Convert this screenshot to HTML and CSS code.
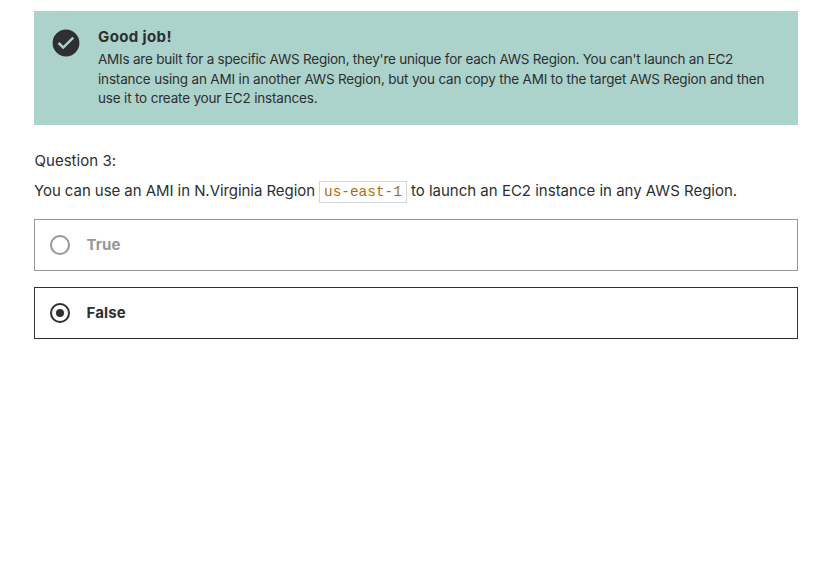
FILE: index.html
```html
<!DOCTYPE html>
<html lang="en">
<head>
<meta charset="utf-8">
<title>Quiz</title>
<link rel="stylesheet" href="styles.css">
</head>
<body>
<main class="quiz">
  <section class="feedback">
    <svg class="feedback-icon" viewBox="0 0 28 28" aria-hidden="true"><circle cx="14" cy="14" r="13.4" fill="#2d2f31"/><path d="M6.6 14l4.6 4.6L21.2 8.6" fill="none" stroke="#acd2cc" stroke-width="2.5"/></svg>
    <div class="feedback-body">
      <h2 class="feedback-title">Good job!</h2>
      <p class="feedback-text"><span class="line-first">AMIs are built for a specific AWS Region, they're unique for each AWS Region. You can't launch an EC2</span><br>instance using an AMI in another AWS Region, but you can copy the AMI to the target AWS Region and then<br>use it to create your EC2 instances.</p>
    </div>
  </section>
  <div class="question-label">Question 3:</div>
  <p class="question"><span class="question-start">You can use an AMI in N.Virginia Region</span><code class="code">us-east-1</code><span>to launch an EC2 instance in any AWS Region.</span></p>
  <div class="answers">
    <label class="answer answer-off"><span class="radio"></span><span class="answer-text">True</span></label>
    <label class="answer answer-on"><span class="radio"></span><span class="answer-text">False</span></label>
  </div>
</main>
</body>
</html>
```
FILE: styles.css
```css
* { box-sizing: border-box; margin: 0; padding: 0; }
body { background: #fff; color: #2d2f31; font-family: Inter, "Liberation Sans", sans-serif; }
.quiz { width: 764px; margin: 11px 0 0 34px; }
.feedback { display: flex; height: 114px; padding: 16px 18px; background: #acd2cc; }
.feedback-icon { flex: none; width: 28px; height: 28px; margin-top: 2px; }
.feedback-body { margin-left: 18px; white-space: nowrap; }
.feedback-title { font-size: 15px; line-height: 20px; font-weight: 700; letter-spacing: 0.38px; }
.feedback-text { font-size: 13.5px; line-height: 19.6px; margin-top: 3px; letter-spacing: -0.18px; }
.line-first { letter-spacing: -0.225px; }
.question-label { margin-top: 24px; padding-left: 0.5px; font-size: 15px; line-height: 24px; letter-spacing: 0.03px; }
.question { display: flex; align-items: center; height: 24px; margin-top: 6px; font-size: 15px; line-height: 24px; white-space: nowrap; }
.question-start { letter-spacing: -0.06px; }
.code { width: 88px; height: 22px; margin: 2px 4px 0; border: 1px solid #d1d7dc; color: #b4690e; font: 14.4px/20px "Liberation Mono", monospace; text-align: center; }
.answers { display: grid; gap: 16px; margin-top: 16px; }
.answer { display: flex; align-items: center; gap: 16.5px; height: 52px; padding: 0 15px; border: 1px solid #2d2f31; font-size: 15px; font-weight: 700; }
.answer-text { padding-bottom: 1px; letter-spacing: 0.1px; }
.answer-off { border-color: #969798; color: #969798; }
.radio { display: flex; align-items: center; justify-content: center; width: 20px; height: 20px; border: 2px solid currentColor; border-radius: 50%; }
.answer-on .radio::after { content: ""; width: 8px; height: 8px; border-radius: 50%; background: currentColor; }
```
